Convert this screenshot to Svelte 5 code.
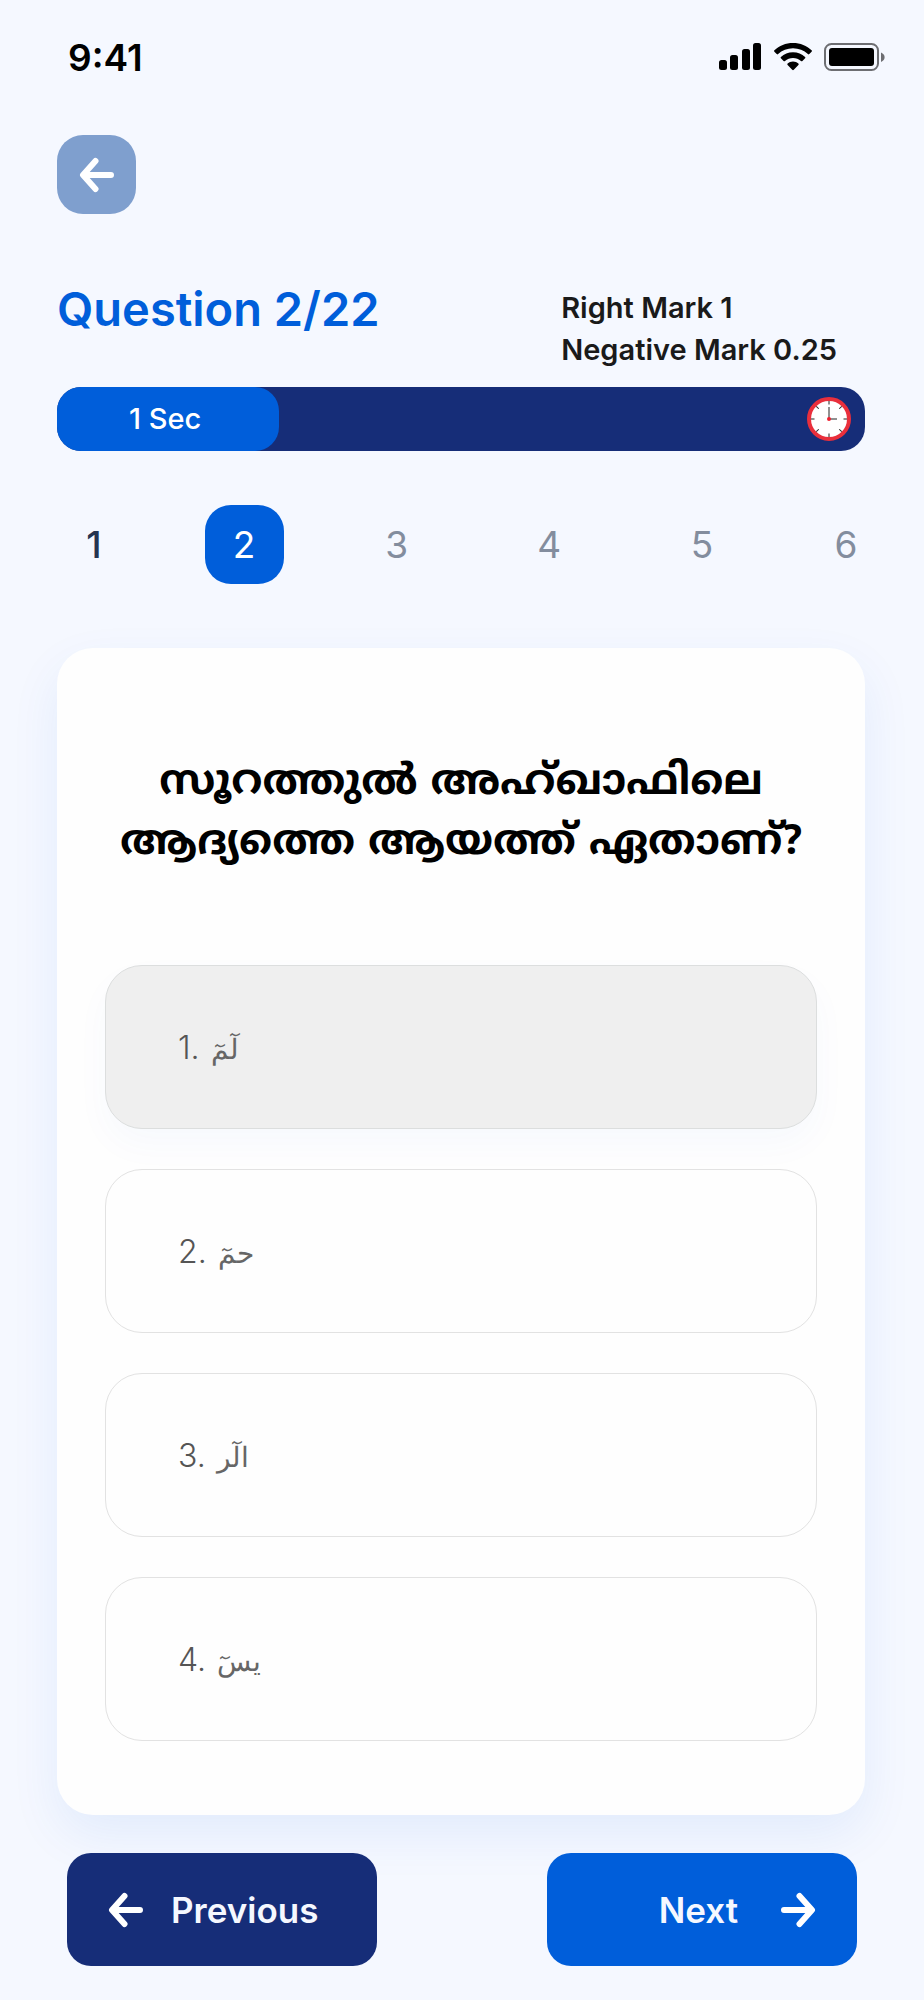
<script>
    let current = $state(2);
    let selected = $state(1);
    const total = 22;
    const seconds = 1;
    const pages = [1, 2, 3, 4, 5, 6];
    const options = [
        { id: 1, text: "لٓمٓ" },
        { id: 2, text: "حمٓ" },
        { id: 3, text: "الٓر" },
        { id: 4, text: "يسٓ" },
    ];
    const ticks = [0, 45, 90, 135, 180, 225, 270, 315];
    let elapsed = $derived(seconds * 28);

    const prev = () => {
        if (current > 1) current -= 1;
    };
    const next = () => {
        if (current < total) current += 1;
    };
</script>

{#snippet arrow(right)}
    <svg class="arrow" class:right viewBox="0 0 36 36" aria-hidden="true">
        <path d="M32 18H5M16.500 4L4 18l12.500 14" />
    </svg>
{/snippet}

<div class="screen">
    <header class="status">
        <span>9:41</span>
        <div class="signals">
            <svg width="43" height="28" viewBox="0 0 43 28" aria-hidden="true">
                <rect x="0" y="17" width="8" height="10" rx="2.5" />
                <rect x="11" y="12" width="8" height="15" rx="2.5" />
                <rect x="23" y="6" width="8" height="21" rx="2.5" />
                <rect x="34" y="0" width="8" height="27" rx="2.5" />
            </svg>
            <svg width="38" height="28" viewBox="0 0 38 28" aria-hidden="true">
                <path d="M19 0C11.700 0 5.200 2.700.4 7.300q-.7.700 0 1.400l2.300 2.400q.7.700 1.400 0C8.100 7.400 13.300 5.300 19 5.300s10.900 2.100 14.900 5.800q.7.700 1.400 0l2.300-2.400q.7-.7 0-1.400C32.800 2.700 26.300 0 19 0z" />
                <path d="M19 9.200c-4.700 0-8.900 1.700-12.100 4.700q-.7.700 0 1.400l2.700 2.700q.7.700 1.400 0c2.200-1.900 5-3.100 8-3.100s5.800 1.200 8 3.100q.7.700 1.400 0l2.700-2.700q.7-.7 0-1.400C27.900 10.900 23.700 9.200 19 9.200z" />
                <path d="M19 18.500c-2.100 0-4 .8-5.400 2.100q-.7.700 0 1.400l4.600 4.800q.8.800 1.600 0l4.600-4.800q.7-.7 0-1.400C23 19.300 21.100 18.500 19 18.500z" />
            </svg>
            <svg width="62" height="28" viewBox="0 0 62 28" aria-hidden="true">
                <rect class="shell" x="1" y="1" width="53" height="26" rx="6.500" />
                <rect x="5" y="5" width="45" height="18" rx="3" />
                <path class="cap" d="M57 9.500c4.800 2 4.800 7.500 0 9.500z" />
            </svg>
        </div>
    </header>

    <button class="back" aria-label="Back">{@render arrow(false)}</button>

    <section class="summary">
        <h1>Question {current}/{total}</h1>
        <p>Right Mark 1<br />Negative Mark 0.25</p>
    </section>

    <div class="timer">
        <div class="elapsed" style={`width: ${elapsed}%`}>{seconds} Sec</div>
        <svg class="clock" viewBox="0 0 44 44" aria-hidden="true">
            <circle cx="22" cy="22" r="20" />
            {#each ticks as angle}
                <path d="M22 4v3.500" transform={`rotate(${angle} 22 22)`} />
            {/each}
            <path d="M22 10v12h8" />
            <circle class="hub" cx="22" cy="22" r="2" />
        </svg>
    </div>

    <nav class="pages" aria-label="Questions">
        {#each pages as page}
            <button
                class:done={page < current}
                class:active={page === current}
                onclick={() => (current = page)}>{page}</button>
        {/each}
    </nav>

    <main class="card">
        <h2 lang="ml">സൂറത്തുൽ അഹ്ഖാഫിലെ<br />ആദ്യത്തെ ആയത്ത് ഏതാണ്?</h2>
        <div class="options" role="radiogroup" aria-label="Answers">
            {#each options as option}
                <label class:selected={selected === option.id}>
                    <input type="radio" name="answer" value={option.id} bind:group={selected} />
                    <span>{option.id}. <bdi lang="ar">{option.text}</bdi></span>
                </label>
            {/each}
        </div>
    </main>

    <footer>
        <button class="previous" onclick={prev}>{@render arrow(false)}Previous</button>
        <button class="next" onclick={next}>Next{@render arrow(true)}</button>
    </footer>
</div>

<style>
    :global(body) {
        background: #f5f8ff;
    }
    .screen {
        padding: 37px 59px 35px 57px;
        font-family: Inter, "Liberation Sans", sans-serif;
        color: #1a1a1a;
    }
    button {
        border: 0;
        padding: 0;
        font: inherit;
        cursor: pointer;
    }
    .status {
        display: flex;
        justify-content: space-between;
        align-items: center;
        height: 40px;
        margin-right: -21px;
        padding-left: 11px;
        font-size: 37px;
        font-weight: 600;
        color: #000;
    }
    .signals {
        display: flex;
        gap: 12px;
    }
    .shell {
        fill: none;
        stroke: #6d6e72;
        stroke-width: 2;
    }
    .cap {
        fill: #6d6e72;
    }
    .arrow {
        width: 36px;
        height: 36px;
        fill: none;
        stroke: #fff;
        stroke-width: 6;
        stroke-linecap: round;
        stroke-linejoin: round;
    }
    .arrow.right {
        transform: scaleX(-1);
    }
    .back {
        display: flex;
        align-items: center;
        justify-content: center;
        width: 79px;
        height: 79px;
        margin-top: 58px;
        border-radius: 26px;
        background: #7f9fce;
    }
    .summary {
        display: flex;
        justify-content: space-between;
        margin-top: 73px;
        padding-right: 28px;
    }
    h1 {
        margin: 0;
        font-size: 47px;
        line-height: 44px;
        font-weight: 600;
        color: #005eda;
    }
    p {
        margin: 0;
        font-size: 29px;
        line-height: 42px;
        font-weight: 600;
    }
    .timer {
        display: flex;
        justify-content: space-between;
        align-items: center;
        margin-top: 16px;
        padding-right: 14px;
        border-radius: 24px;
        background: #162d78;
    }
    .elapsed {
        box-sizing: border-box;
        padding-right: 6px;
        border-radius: 24px;
        background: #005eda;
        font-size: 29px;
        line-height: 64px;
        font-weight: 500;
        text-align: center;
        color: #fff;
    }
    .clock {
        width: 44px;
        height: 44px;
        fill: #fff;
        stroke: #222;
        stroke-width: 1;
    }
    .clock circle {
        stroke: #e92f3c;
        stroke-width: 4;
    }
    .clock .hub {
        fill: #f02030;
        stroke: none;
    }
    .pages {
        display: flex;
        justify-content: space-between;
        margin: 54px -12px 0 0;
    }
    .pages button {
        width: 79px;
        height: 79px;
        border-radius: 26px;
        background: none;
        font-size: 37px;
        color: #838d9e;
    }
    .pages button:first-child {
        width: 74px;
    }
    .pages button:last-child {
        width: 62px;
    }
    .pages .done {
        font-weight: 500;
        color: #253450;
    }
    .pages .active {
        background: #005eda;
        color: #fff;
    }
    .card {
        margin-top: 64px;
        padding: 106px 48px 74px;
        border-radius: 36px;
        background: #fefefe;
        box-shadow: 0 20px 50px rgba(0, 94, 218, 0.08);
    }
    h2 {
        margin: 0 0 91px;
        font-family: "Noto Sans Malayalam", Manjari, "Noto Sans", sans-serif;
        font-size: 42px;
        line-height: 60px;
        font-weight: 700;
        text-align: center;
        color: #000;
    }
    .options {
        display: grid;
        gap: 40px;
    }
    label {
        position: relative;
        display: flex;
        align-items: center;
        box-sizing: border-box;
        height: 164px;
        padding-left: 72px;
        border: 1px solid #e2e2e2;
        border-radius: 37px;
        font-size: 32px;
        font-weight: 300;
        color: #555;
        cursor: pointer;
    }
    label.selected {
        border-color: #dcdede;
        background: #efefef;
        box-shadow: 0 16px 36px rgba(0, 94, 218, 0.03);
    }
    label input {
        position: absolute;
        opacity: 0;
    }
    bdi {
        margin-left: 2px;
        font-family: "DejaVu Sans", sans-serif;
        font-size: 28px;
        font-weight: 200;
        color: #666;
    }
    footer {
        display: flex;
        justify-content: space-between;
        margin-top: 38px;
        padding: 0 8px 0 10px;
    }
    footer button {
        display: flex;
        align-items: center;
        width: 310px;
        height: 113px;
        border-radius: 24px;
        font-size: 35px;
        font-weight: 600;
        color: #f5f8ff;
    }
    .previous {
        gap: 27px;
        padding-left: 41px;
        background: #162d78;
    }
    .next {
        justify-content: flex-end;
        gap: 42px;
        padding-right: 41px;
        background: #005eda;
    }
</style>
